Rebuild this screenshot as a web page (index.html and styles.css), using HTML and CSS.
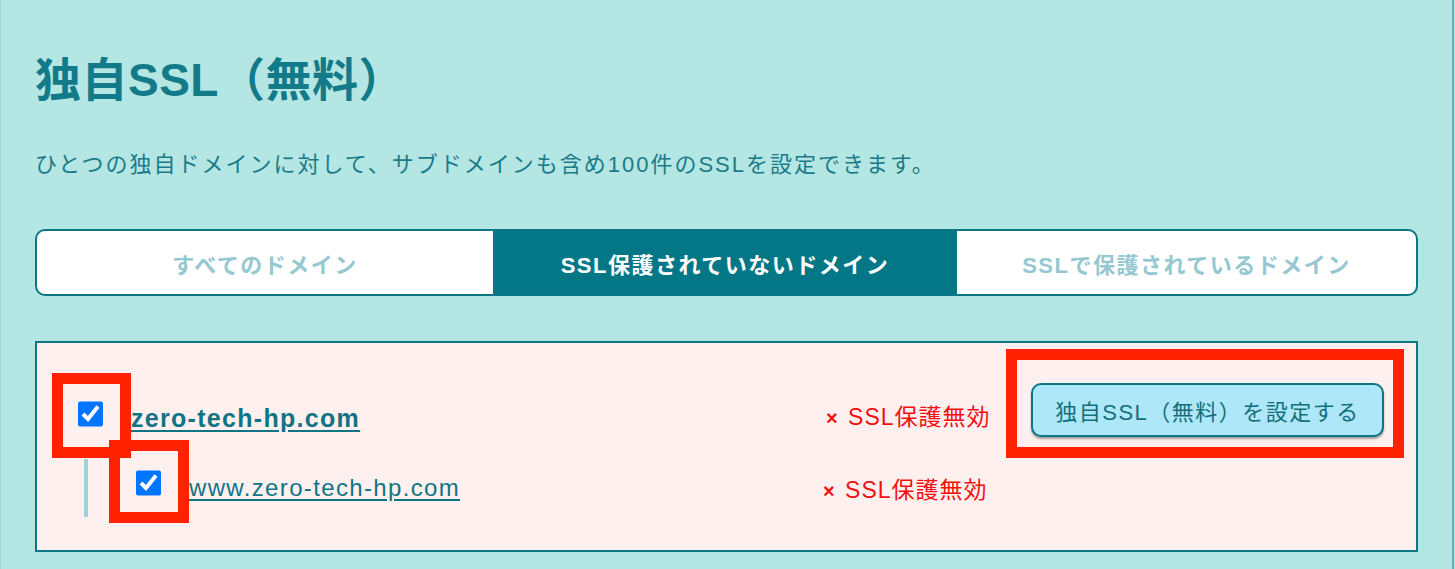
FILE: index.html
```html
<!DOCTYPE html>
<html lang="ja">
<head>
    <meta charset="UTF-8">
    <title>独自SSL（無料）</title>
    <link rel="stylesheet" href="styles.css">
</head>
<body>
<div class="page">
    <h1 class="title">独自SSL（無料）</h1>
    <p class="lead">ひとつの独自ドメインに対して、サブドメインも含め100件のSSLを設定できます。</p>

    <div class="tabs">
        <div class="tab">すべてのドメイン</div>
        <div class="tab active">SSL保護されていないドメイン</div>
        <div class="tab">SSLで保護されているドメイン</div>
    </div>

    <div class="panel">
        <div class="row main">
            <input type="checkbox" class="check" checked>
            <a href="#" class="domain">zero-tech-hp.com</a>
            <span class="status"><b>×</b> SSL保護無効</span>
            <div class="action">
                <button class="btn">独自SSL（無料）を設定する</button>
            </div>
        </div>
        <div class="row sub">
            <div class="tree">
                <input type="checkbox" class="check" checked>
                <a href="#" class="domain">www.zero-tech-hp.com</a>
            </div>
            <span class="status"><b>×</b> SSL保護無効</span>
            <div class="action"></div>
        </div>

        <!-- 注釈の赤枠 -->
        <div class="mark mark1"></div>
        <div class="mark mark2"></div>
        <div class="mark mark3"></div>
    </div>
</div>
</body>
</html>
```

FILE: styles.css
```css
*{
    margin: 0;
    padding: 0;
    box-sizing: border-box;
}
html,body {
    width: 100%;
    height: 100%;
    background-color: #b4e6e3;
    font-family: "Liberation Sans", "Noto Sans CJK JP", sans-serif;
    overflow: hidden;
}
.page {
    width: 1454px;
    height: 100%;
    border-left: 1px solid #9fd6d6;
    border-right: 2px solid #62b3b6;
    padding: 53px 0 0 34px;
}
.title {
    font-size: 46px;
    line-height: 54px;
    letter-spacing: 0.5px;
    color: #127a89;
    font-weight: bold;
}
.lead {
    margin-top: 42px;
    font-size: 22px;
    letter-spacing: 2px;
    line-height: 32px;
    color: #1a7a89;
}
.tabs {
    margin-top: 48px;
    width: 1383px;
    height: 67px;
    border: 2px solid #0b7786;
    border-radius: 10px;
    background-color: #fff;
    display: flex;
    overflow: hidden;
}
.tab {
    flex: 1;
    display: flex;
    align-items: center;
    justify-content: center;
    font-size: 22px;
    font-weight: bold;
    letter-spacing: 1.5px;
    color: #95c8d0;
}
.tab:first-child {
    flex: 0 0 456px;
}
.tab.active {
    flex: 0 0 464px;
    background-color: #047787;
    color: #fff;
}
.panel {
    position: relative;
    margin-top: 45px;
    width: 1383px;
    height: 211px;
    border: 2px solid #0b7786;
    background-color: #fff0f0;
    padding: 39px 32px 0 41px;
}
.row {
    display: flex;
    align-items: center;
}
.row.main {
    height: 56px;
}
.row.sub {
    margin-top: 21px;
    height: 58px;
}
.check {
    width: 25px;
    height: 26px;
    margin: 0;
    accent-color: #0075ff;
    flex: none;
}
.main .check {
    margin-top: 8px;
}
.domain {
    color: #0f7584;
    font-size: 24px;
    letter-spacing: 1.35px;
    text-underline-offset: 3px;
}
.main .domain {
    margin-left: 28px;
    margin-top: 16px;
    font-weight: bold;
    font-size: 25px;
    letter-spacing: 1.3px;
    flex: 1;
}
.tree {
    flex: 1;
    display: flex;
    align-items: center;
    align-self: stretch;
    margin-left: 6px;
    border-left: 4px solid #9dd3d8;
    padding-left: 48px;
}
.tree .check {
    margin-bottom: 10px;
}
.tree .domain {
    margin-left: 28px;
}
.status {
    width: 205px;
    color: #f21010;
    font-size: 23px;
    letter-spacing: 1px;
}
.main .status {
    margin-top: 10px;
}
.sub .status {
    margin-left: -3px;
    width: 208px;
}
.status b {
    font-size: 20px;
    margin-right: 2px;
}
.action {
    width: 353px;
}
.btn {
    width: 353px;
    height: 54px;
    border: 2px solid #0b7786;
    border-radius: 10px;
    background-color: #aee7f7;
    box-shadow: 0 2px 2px rgba(0,0,0,0.35);
    font-family: "Liberation Sans", "Noto Sans CJK JP", sans-serif;
    font-size: 22px;
    letter-spacing: 1.5px;
    color: #126f7c;
    cursor: pointer;
}
.mark {
    position: absolute;
    border: 11px solid #ff2200;
}
.mark1 {
    left: 15px;
    top: 30px;
    width: 79px;
    height: 85px;
}
.mark2 {
    left: 72px;
    top: 97px;
    width: 80px;
    height: 83px;
}
.mark3 {
    left: 969px;
    top: 6px;
    width: 398px;
    height: 109px;
}
```
